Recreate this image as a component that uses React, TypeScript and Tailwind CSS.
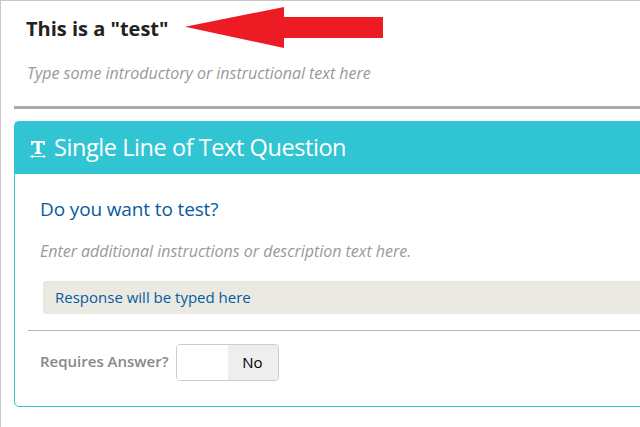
export default function App() {
  return (
    <div className="h-[427px] w-[640px] overflow-hidden border-l border-t border-[#c8c8c8] bg-white font-['Open_Sans',sans-serif]">
      <header className="ml-[13px] h-[108px] border-b-3 border-[#a9a9a9] pl-3">
        <div className="flex h-12 items-start">
          <h1 className="w-[159px] pt-[14px] text-[20px] leading-7 font-bold whitespace-nowrap text-[#222]">
            This is a "test"
          </h1>
          <svg className="mt-[5px]" width="199" height="43" viewBox="0 0 199 43">
            <path d="M0 20.8 L99 1 V11 H198 V32 H99 V42 Z" fill="#ed1c24" />
          </svg>
        </div>
        <p className="pt-3 pl-px text-[16px] leading-6 tracking-[-0.02px] text-[#999] italic">
          Type some introductory or instructional text here
        </p>
      </header>

      <section className="mt-3 ml-[13px] h-[286px] w-[640px] rounded-[5px] border border-[#31c5d3] bg-white">
        <div className="flex h-[52px] items-center bg-[#31c5d3] pl-[15px] text-white">
          <svg className="mt-[2px]" width="16" height="18" viewBox="0 0 16 18" fill="currentColor">
            <path d="M1 1H15V5H13.5L12.5 2.8H9.7V12.3L11.7 13V14H4.5V13L6.5 12.3V2.8H3.5L2.5 5H1Z" />
            <path d="M0 16.5L3 14.8V16H13V14.8L16 16.5L13 18V17H3V18Z" />
          </svg>
          <h2 className="-mt-[3px] ml-2 text-[23.5px] leading-8 tracking-[-0.43px] whitespace-nowrap">
            Single Line of Text Question
          </h2>
        </div>
        <div className="pl-[25px]">
          <h3 className="pt-[21px] text-[19px] leading-7 tracking-[-0.13px] text-[#085ba0]">Do you want to test?</h3>
          <p className="pt-4 text-[16px] leading-6 tracking-[-0.02px] text-[#999] italic">
            Enter additional instructions or description text here.
          </p>
          <div className="mt-[18px] ml-[3px] flex h-[33px] items-center rounded-[3px] border border-[#e7e6df] bg-[#eae9e2] pl-[11px] text-[15px] text-[#085ba0]">
            Response will be typed here
          </div>
        </div>
        <div className="mt-4 ml-[13px] flex border-t border-[#b5b5b5] pt-[13px] pl-3">
          <span className="w-[136px] pt-[5px] text-[15px] leading-6 font-semibold text-[#888]">
            Requires Answer?
          </span>
          <div className="flex h-[37px] w-[103px] overflow-hidden rounded border border-[#ccc]">
            <span className="w-[51px] bg-white" />
            <span className="flex flex-1 items-center justify-center bg-[#eee] pr-px text-[15px] text-black">No</span>
          </div>
        </div>
      </section>
    </div>
  );
}
